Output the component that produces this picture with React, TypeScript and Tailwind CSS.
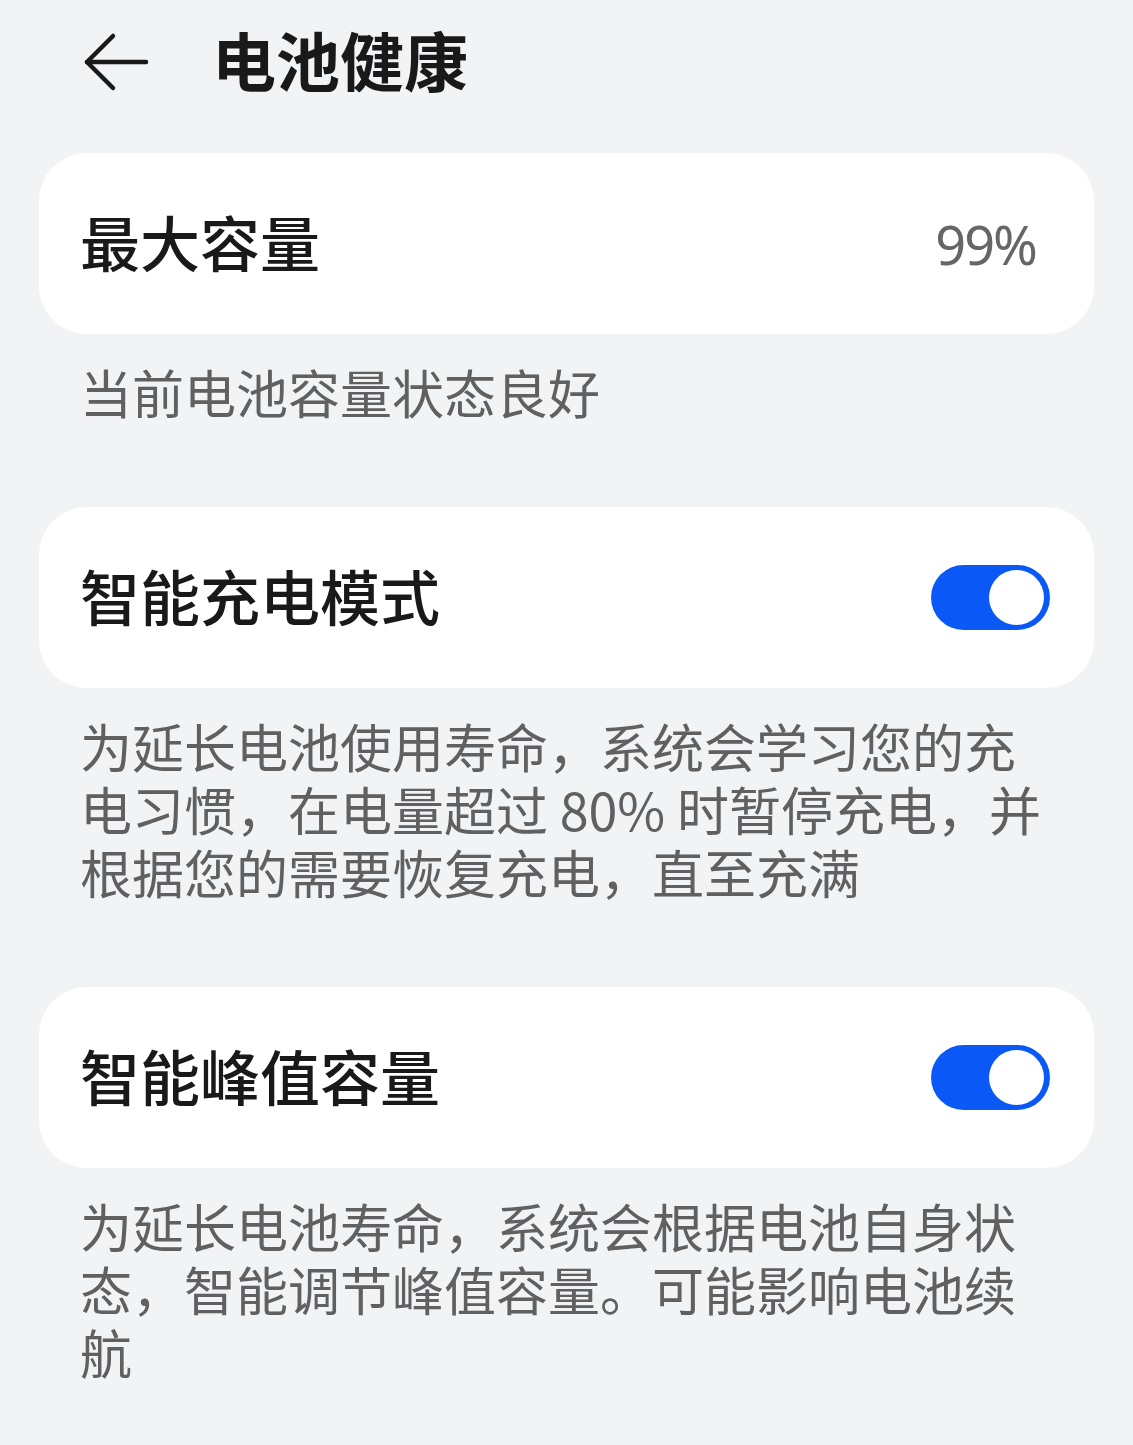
const cjk = "font-['Noto_Sans_CJK_SC','Noto_Sans',sans-serif]"

const Toggle = () => (
  <div className="flex h-[65px] w-[119px] items-center justify-end rounded-full bg-[#0a59f7] pr-[6px]">
    <div className="h-[55px] w-[55px] rounded-full bg-white" />
  </div>
)

const Card = ({ title, children }: { title: string; children: React.ReactNode }) => (
  <div className="flex h-[181px] items-center justify-between rounded-[48px] bg-white pl-[41px] pr-[44px]">
    <span className="pb-[6px] text-[60px] leading-none font-medium text-[#191919]">{title}</span>
    {children}
  </div>
)

const Desc = ({ lines }: { lines: string[] }) => (
  <div className="px-[41px] pt-[26px] pb-[84px] text-[52px] leading-[63px] whitespace-nowrap text-[#606060]">
    {lines.map((line, i) => (
      <div key={i}>{line}</div>
    ))}
  </div>
)

export default function App() {
  return (
    <div className={`min-h-[1445px] w-[1133px] bg-[#f1f3f5] ${cjk}`}>
      <header className="flex h-[124px] items-center pl-[82px]">
        <svg width="70" height="64" viewBox="0 0 70 64" fill="none" stroke="#191919" strokeWidth="4.5" strokeLinecap="round" strokeLinejoin="round">
          <path d="M5 32 H64" />
          <path d="M31 6 L5 32 L31 58" />
        </svg>
        <h1 className="mb-[9px] ml-[60px] text-[64px] leading-none font-bold text-[#191919]">电池健康</h1>
      </header>

      <main className="px-[39px] pt-[29px]">
        <Card title="最大容量">
          <span className="mr-[14px] font-['Noto_Sans',sans-serif] text-[54px] leading-none tracking-[-2px] text-[#666666]">99%</span>
        </Card>
        <Desc lines={['当前电池容量状态良好']} />

        <Card title="智能充电模式">
          <Toggle />
        </Card>
        <Desc
          lines={[
            '为延长电池使用寿命，系统会学习您的充',
            '电习惯，在电量超过 80% 时暂停充电，并',
            '根据您的需要恢复充电，直至充满',
          ]}
        />

        <Card title="智能峰值容量">
          <Toggle />
        </Card>
        <Desc
          lines={[
            '为延长电池寿命，系统会根据电池自身状',
            '态，智能调节峰值容量。可能影响电池续',
            '航',
          ]}
        />
      </main>
    </div>
  )
}
